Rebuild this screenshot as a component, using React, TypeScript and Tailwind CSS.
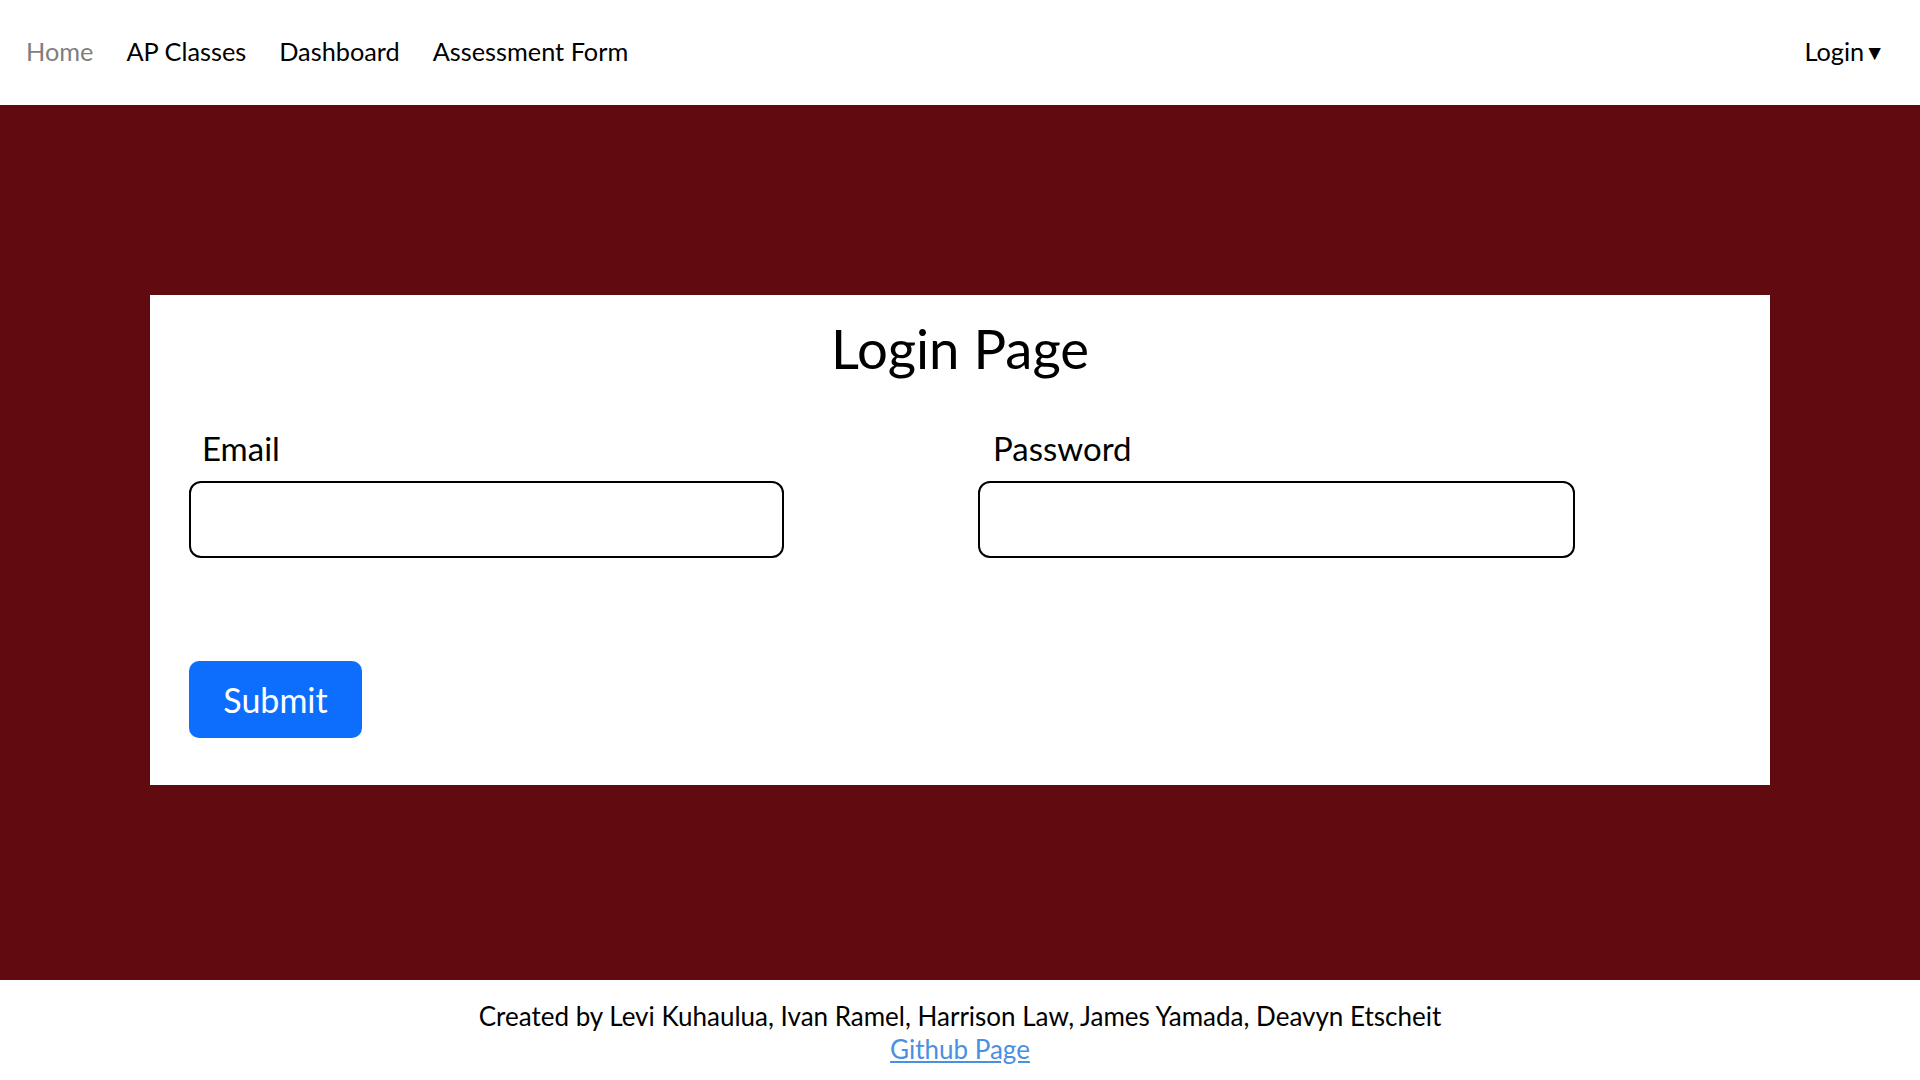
import { useState } from 'react'

const navLinks = ['AP Classes', 'Dashboard', 'Assessment Form']

export default function App() {
  const [email, setEmail] = useState('')
  const [password, setPassword] = useState('')

  return (
    <div className="flex min-h-screen flex-col bg-white font-['Lato',sans-serif] text-black">
      <nav className="flex h-[105px] items-center justify-between pb-[2px] pl-[26px] pr-[35px] text-[25.3px]">
        <div className="flex items-center gap-[33px]">
          <a href="#" className="text-[#7f7f7f]">Home</a>
          {navLinks.map((link) => (
            <a key={link} href="#">{link}</a>
          ))}
        </div>
        <button type="button" className="flex items-center">
          Login<span className="text-[21px]">▼</span>
        </button>
      </nav>

      <main className="flex h-[875px] justify-center bg-[#610b10] pt-[190px]">
        <section className="h-[490px] w-[1620px] bg-white px-[39px] pt-[18px]">
          <h1 className="text-center text-[54.5px] leading-[70px]">Login Page</h1>

          <div className="mt-[45px] flex">
            <div className="w-[789px]">
              <label className="block pl-[13px] text-[33px] leading-[40px]">Email</label>
              <input
                type="email"
                value={email}
                onChange={(e) => setEmail(e.target.value)}
                className="mt-[13px] h-[77px] w-[595px] rounded-[12px] border-2 border-black px-3 text-[24px]"
              />
            </div>
            <div>
              <label className="block pl-[15px] text-[33px] leading-[40px]">Password</label>
              <input
                type="password"
                value={password}
                onChange={(e) => setPassword(e.target.value)}
                className="mt-[13px] h-[77px] w-[597px] rounded-[12px] border-2 border-black px-3 text-[24px]"
              />
            </div>
          </div>

          <button
            type="button"
            className="mt-[103px] h-[77px] w-[173px] rounded-[10px] bg-[#0d6efd] text-[34px] text-white"
          >
            Submit
          </button>
        </section>
      </main>

      <footer className="flex h-[100px] flex-col items-center justify-center pt-[5px] text-[26px] leading-[33px]">
        <p>Created by Levi Kuhaulua, Ivan Ramel, Harrison Law, James Yamada, Deavyn Etscheit</p>
        <a href="#" className="text-[#4a90e2] underline">Github Page</a>
      </footer>
    </div>
  )
}
